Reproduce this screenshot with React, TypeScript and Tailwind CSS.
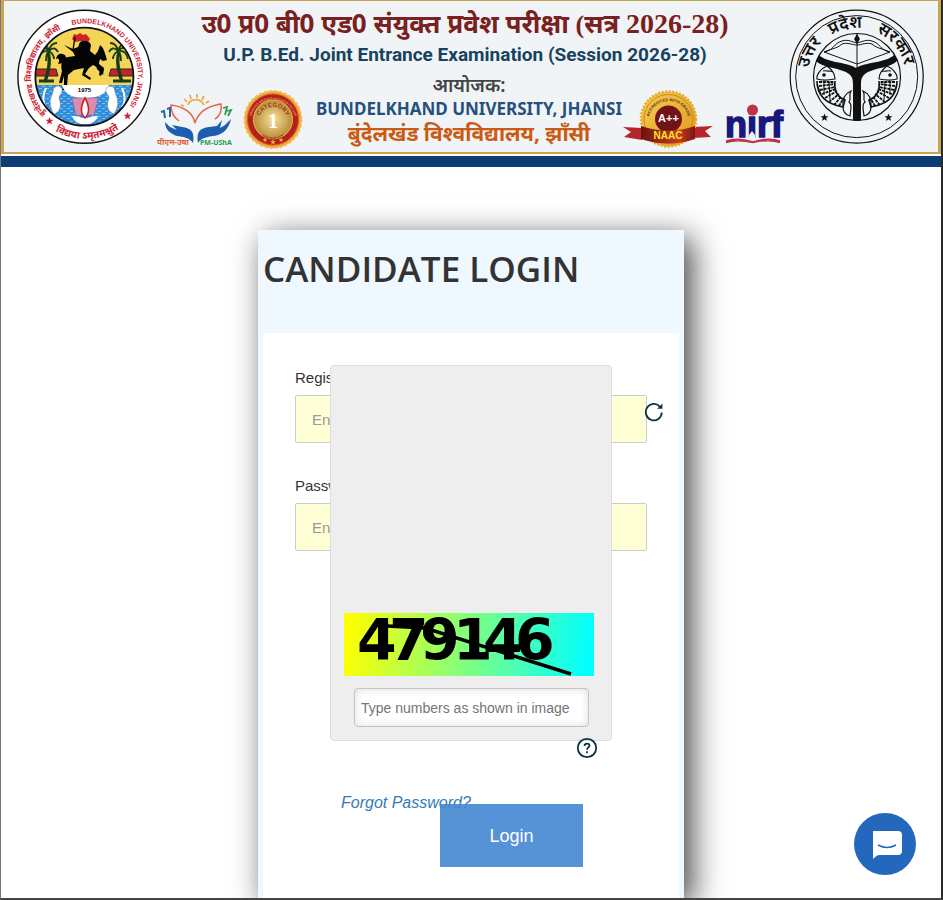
import { FormEvent, useState } from 'react';

const STAR = '0,-4 1.1,-1.2 4,-1.2 1.7,0.6 2.5,3.5 0,1.8 -2.5,3.5 -1.7,0.6 -4,-1.2 -1.1,-1.2';

function UniversityEmblem() {
  return (
    <svg viewBox="17 9 136 136" className="size-[136px] shrink-0" role="img" aria-label="Bundelkhand University">
      <defs>
        <path id="bu-hi" d="M 46.2 113.6 A 53 53 0 0 1 69 26" />
        <path id="bu-en" d="M 72 25 A 53 53 0 0 1 127 109" />
        <path id="bu-motto" d="M 52 129 A 61.5 61.5 0 0 0 122 127" />
        <clipPath id="bu-clip">
          <circle cx="84.4" cy="76.7" r="48.5" />
        </clipPath>
        <pattern id="bu-water" width="7" height="5" patternUnits="userSpaceOnUse">
          <rect width="7" height="5" fill="#2f8ddb" />
          <path d="M0 1.2h3M4 3.6h3" stroke="#9fd4f7" strokeWidth=".8" />
        </pattern>
      </defs>
      <circle cx="84.4" cy="76.7" r="66.5" fill="#fff" stroke="#111" strokeWidth="1.4" />
      <g clipPath="url(#bu-clip)">
        <rect x="34" y="26" width="102" height="60" fill="#f4d558" />
        <rect x="34" y="85" width="102" height="42" fill="url(#bu-water)" />
        <path d="M34 69h22l2 7H34zM135 69h-24l-2 7h26z" fill="#c4232b" stroke="#14321a" />
        {/* palms */}
        <g fill="none" stroke="#143d18">
          <path d="M48 52c3 10 0 20-3 30M119 52c-3 10 0 20 3 30" strokeWidth="3.4" />
          <path
            d="M49 51c-5-5-9-4-12 0M49 51c-6-1-9 3-10 8M49 51c-3 3-3 7-3 10M49 51c4-4 7-3 9 1M49 51c-1-5-5-8-9-7M49 51c3 2 5 5 5 8M49 51c1-5 4-8 8-8"
            strokeWidth="1.8"
          />
          <path
            d="M118 51c5-5 9-4 12 0M118 51c6-1 9 3 10 8M118 51c3 3 3 7 3 10M118 51c-4-4-7-3-9 1M118 51c1-5 5-8 9-7M118 51c-3 2-5 5-5 8M118 51c-1-5-4-8-8-8"
            strokeWidth="1.8"
          />
          <path d="M39 81h15M113 81h18" strokeWidth="3" />
        </g>
        {/* rider */}
        <path d="M72 39l2-5 3 1 3-2 3 2 3-1 4 5-2 3-7-1-6 1z" fill="#cf2227" />
        <path
          d="M79 45c0-5 10-6 12 0l-1 6 5 4 3-4 2-6 3 3 3 9-4 2-3-1 0 6 5 4-3 8-2-1 1-6-7-4-4 3-4 6 6 4-1 2-8-5 2-7-10 2-6 5-1 11-3 4h-2l2-6v-8l-2 7h-3l3-12c-2-6 0-13 6-14l7-1-2-4-9-7 9 4 5-2z"
          fill="#050505"
        />
        <path d="M65 55c-6-3-8 0-9 4 3-2 4 2 2 5 4 0 7-3 9-5z" fill="#050505" />
        <path d="M94 58l5-8 5 1 3 9-4 1-3-2-2 8 6 2-1 6-6-6z" fill="#050505" />
        <path d="M75 37l-2 13" stroke="#050505" strokeWidth="1.4" fill="none" />
        {/* bowl with the founding year */}
        <path d="M62 85h47c-3 10-12 13-24 13S65 95 62 85z" fill="#fff" />
        <path d="M72 98h26l-4 17H76z" fill="#dc8dad" stroke="#a45d86" strokeWidth=".6" />
        <path d="M72 116c7 0 8 2 13 2s6-2 13-2c-2 5-5 7-9 8h-8c-4-1-7-3-9-8z" fill="#fff" />
        <path d="M85 98c5 9 4 16 0 20-4-4-5-11 0-20z" fill="#fff" stroke="#cf2227" strokeWidth="1.6" />
        <path
          d="M54 88c3-3 7-2 8 1 1 4-3 6-3 9 3 8 1 14-5 16-4-6-5-13-2-19zM114 88c-3-3-7-2-8 1-1 4 3 6 3 9-3 8-1 14 5 16 4-6 5-13 2-19z"
          fill="#fff"
          stroke="#6f8fae"
          strokeWidth=".6"
        />
        <path d="M46 88c-3 6-4 14 0 19M122 88c3 6 4 14 0 19" fill="none" stroke="#fff" strokeWidth="2" />
      </g>
      <circle cx="84.4" cy="76.7" r="49" fill="none" stroke="#111" strokeWidth="1.8" />
      <text x="84.5" y="92" textAnchor="middle" className="fill-black font-['Liberation_Sans'] text-[6px] font-bold">1975</text>
      <g className="fill-[#cf1f35] font-['Liberation_Sans','Noto_Sans',sans-serif] font-bold">
        <text className="text-[8px]"><textPath href="#bu-hi">बुन्देलखण्ड विश्वविद्यालय, झाँसी</textPath></text>
        <text className="text-[7px]"><textPath href="#bu-en">BUNDELKHAND UNIVERSITY, JHANSI</textPath></text>
        <text className="text-[10px]"><textPath href="#bu-motto" startOffset="50%" textAnchor="middle">विद्यया ऽमृतमश्नुते</textPath></text>
      </g>
      <polygon points={STAR} transform="translate(49.500 121)" fill="#cf1f35" />
      <polygon points={STAR} transform="translate(127.500 116)" fill="#cf1f35" />
    </svg>
  );
}

function PmUshaLogo() {
  return (
    <svg viewBox="157 90 76 60" className="h-[60px] w-[76px] shrink-0" role="img" aria-label="PM-USHA">
      <path
        d="M188 105c2-7 13-7 16 0M184 106l-3-1M187 102l-3-3M191 99l-1-4M197 98l0-4M202 100l2-4M206 103l3-2"
        fill="none"
        stroke="#f0a33a"
        strokeWidth="1.7"
      />
      <path
        d="M195 123c-2-9-9-16-24-18 0 7 2 12 8 16M195 123c3-10 12-17 26-19 1 7-1 12-6 15"
        fill="none"
        stroke="#e9633f"
        strokeWidth="1.5"
      />
      <path d="M167 109l3-1 0 9M161 112l3-1 1 7" fill="none" stroke="#2563ad" strokeWidth="2" />
      <path d="M223 108l4-1-2 8M227 111l4-1-3 6" fill="none" stroke="#2f9a51" strokeWidth="1.8" />
      <path
        d="M193 143c2-11-2-15-11-16l-10-2 5 5-7-3-5-5c0 8 6 12 12 14 6 1 12 1 16 7zM198 143c-2-11 2-15 11-16l8-1 5-6-2 8 5-3 6-6c-2 9-7 14-13 16-7 2-16 1-20 8z"
        fill="#1c5db0"
      />
      <g className="font-['Noto_Sans',sans-serif] font-bold">
        <text x="157" y="145" className="fill-[#e9633f] text-[8px]">पीएम-उषा</text>
        <text x="200" y="145" className="fill-[#1f9a52] text-[7px]">PM-UShA</text>
      </g>
    </svg>
  );
}

function CategoryBadge() {
  return (
    <svg viewBox="243 90 60 60" className="size-[60px] shrink-0" role="img" aria-label="Category 1 University">
      <defs>
        <radialGradient id="cat-gold">
          <stop offset="0" stopColor="#f5e3a0" />
          <stop offset="1" stopColor="#b98c35" />
        </radialGradient>
        <path id="cat-top" d="M 259 121 A 14 14 0 0 1 287 121" />
        <path id="cat-bottom" d="M 255 122 A 18 18 0 0 0 291 122" />
        <path id="cat-ring" d="M 252 130 A 22.500 22.500 0 1 1 294 130" />
      </defs>
      <circle cx="273" cy="119.500" r="28.500" fill="#eda63c" />
      <circle cx="273" cy="119.500" r="28.500" fill="none" stroke="#f6bd58" strokeWidth="2" strokeDasharray="3 2" />
      <circle cx="273" cy="119.500" r="25.500" fill="#b3211d" stroke="#d9541f" />
      <circle cx="273" cy="119.500" r="19.500" fill="url(#cat-gold)" stroke="#e8bd59" />
      <text className="fill-[#e9a455] font-['Liberation_Sans'] text-[3px] font-bold">
        <textPath href="#cat-ring" startOffset="50%" textAnchor="middle">GRANTED GRADED AUTONOMY BY UGC</textPath>
      </text>
      <g className="fill-[#9d3420] font-['Liberation_Sans'] font-bold">
        <text className="text-[6px]"><textPath href="#cat-top" startOffset="50%" textAnchor="middle">CATEGORY</textPath></text>
        <text className="text-[4px]"><textPath href="#cat-bottom" startOffset="50%" textAnchor="middle">UNIVERSITY</textPath></text>
      </g>
      <text x="273" y="128" textAnchor="middle" className="fill-white font-['Liberation_Serif'] text-[20px] font-bold">1</text>
      <g fill="#f5b82e">
        <polygon points={STAR} transform="translate(265 140) scale(.6)" />
        <polygon points={STAR} transform="translate(273 142) scale(.7)" />
        <polygon points={STAR} transform="translate(281 140) scale(.6)" />
      </g>
    </svg>
  );
}

function NaacBadge() {
  return (
    <svg viewBox="621 88 90 62" className="h-[62px] w-[90px] shrink-0" role="img" aria-label="NAAC A++">
      <defs>
        <linearGradient id="naac-gold" x1="0" y1="0" x2="1" y2="1">
          <stop offset="0" stopColor="#f7cf52" />
          <stop offset="1" stopColor="#e0961c" />
        </linearGradient>
        <linearGradient id="naac-ribbon">
          <stop offset="0" stopColor="#6d1210" />
          <stop offset=".7" stopColor="#c93a20" />
          <stop offset="1" stopColor="#7a1511" />
        </linearGradient>
        <path id="naac-top" d="M 646.500 121 A 20 20 0 1 1 686.500 121" />
      </defs>
      <path d="M621 127l19 1v12l-18-3 7-5zM711 126l-20 1v11l18-1-6-6z" fill="#b8252a" />
      <circle cx="666.500" cy="119" r="27.500" fill="url(#naac-gold)" stroke="#eaa928" strokeWidth="2.500" strokeDasharray="2 1.500" />
      <circle cx="666.500" cy="119" r="24.500" fill="none" stroke="#c8861f" />
      <circle cx="666.500" cy="119" r="13.500" fill="#701417" />
      <text className="fill-[#533210] font-['Liberation_Sans'] text-[4px] font-bold">
        <textPath href="#naac-top" startOffset="50%" textAnchor="middle">ACCREDITED WITH GRADE</textPath>
      </text>
      <text x="666.500" y="122" textAnchor="middle" className="fill-white font-['Liberation_Sans'] text-[11px] font-bold">A++</text>
      <path d="M639 126c18 6 37 6 54 0v13c-17 6-36 6-54 0z" fill="url(#naac-ribbon)" />
      <text x="666" y="139" textAnchor="middle" className="fill-[#ffe81f] font-['Liberation_Sans'] text-[10px] font-bold">NAAC</text>
    </svg>
  );
}

function NirfLogo() {
  return (
    <svg viewBox="724 100 64 50" className="h-[50px] w-[64px] shrink-0" role="img" aria-label="NIRF">
      <text x="724" y="137" stroke="#17177c" strokeWidth="1.500" className="fill-[#17177c] font-['Liberation_Sans'] text-[36px] font-bold">nirf</text>
      <circle cx="751.500" cy="110" r="5.500" fill="#bf3345" />
      <path d="M748 138v-3l3-4 3 4v3z" fill="#f0f4f6" />
      <path d="M725 141c10-3 18-2 27 1 9-3 18-4 27-1M725 142.500c10-3 18-2 27 0 9-2 18-3 27 0" fill="none" stroke="#bf3345" strokeWidth="1.500" />
    </svg>
  );
}

function Fish() {
  return (
    <g fill="none" stroke="#111" strokeWidth="1.200">
      <path d="M816 79c-1-5 5-11 10-13 4 3 8 7 8 13-5 1-12 2-18 0z" />
      <path d="M822 71c4-1 7 1 9 0" />
      <circle cx="823" cy="75" r="1.200" fill="#111" />
      <path d="M816 81c0 14 9 23 26 26l2-7c-8-3-11-10-10-19" strokeWidth="1.600" />
      <path d="M818 82h15M818 86l16-2M819 90l15-3M821 94l14-5M824 98l12-7M828 102l10-8M833 105l7-8M838 106l4-7" strokeWidth="1.800" strokeDasharray="3 .8" />
      <path d="M823 82l0 13M828 82l1 18M816 84l4 10" strokeWidth="1" />
      <path d="M842 107c-1-8 1-13 8-16-3 5 1 8-2 11 3 2 2 6 1 14-4-1-7-4-7-9z" />
    </g>
  );
}

function StateEmblem() {
  return (
    <svg viewBox="788 9 136 136" className="size-[136px] shrink-0" role="img" aria-label="Government of Uttar Pradesh">
      <defs>
        <path id="up-text" d="M 807.500 68.200 A 49 49 0 0 1 904.200 69.800" />
        <clipPath id="up-clip">
          <circle cx="856" cy="77" r="44" />
        </clipPath>
      </defs>
      <g fill="none" stroke="#111">
        <circle cx="855.700" cy="76.600" r="66.500" strokeWidth="1.200" />
        <circle cx="855.700" cy="76.600" r="61" strokeWidth="1" />
        <circle cx="856" cy="77" r="43.500" strokeWidth="1.200" />
      </g>
      <g clipPath="url(#up-clip)">
        <path
          d="M818 55c8 8 28 7 37 13 9-6 30-5 38-13l4 5c-8 9-24 7-33 14-4 3-4 7-4 12v36h-8V86c0-5 0-9-4-12-9-7-26-5-34-14z"
          fill="#111"
        />
        <Fish />
        <g transform="translate(1712 0) scale(-1 1)">
          <Fish />
        </g>
      </g>
      <path
        d="M823 52c9-1 10-9 18-11 6-2 10 1 15 2 5-1 9-4 15-2 8 2 9 10 18 11M823 52c9-4 12-3 18-8 6-2 10 1 15 1 5 0 9-3 15-1 6 5 9 4 18 8M823 52l33 12 33-12M856 34v36"
        fill="none"
        stroke="#111"
        strokeWidth="1"
      />
      <path d="M856 34l3 5-3 5-3-5z" fill="#111" />
      <g className="fill-[#111] font-['Noto_Sans',sans-serif] text-[17px] font-semibold">
        <text><textPath href="#up-text">उत्तर</textPath></text>
        <text><textPath href="#up-text" startOffset="30%">प्रदेश</textPath></text>
        <text><textPath href="#up-text" startOffset="64%">सरकार</textPath></text>
      </g>
      <polygon points={STAR} transform="translate(823.500 117.500)" fill="#111" />
      <polygon points={STAR} transform="translate(887.500 117.500)" fill="#111" />
    </svg>
  );
}

function Banner() {
  return (
    <header className="border-b-[11px] border-[#0f3b74]">
      <div className="mb-0.5 flex items-start justify-between border-x-[3px] border-t border-b-2 border-[#c9a455] bg-[#f0f4f6] px-[13px] pb-0.5">
        <div className="pt-2"><UniversityEmblem /></div>
        <div className="flex min-w-0 flex-1 flex-col pt-0.5 whitespace-nowrap">
          <h1 className="h-10 pr-3 text-center font-['Noto_Sans',sans-serif] text-[26px] leading-10 font-bold text-[#7b2020]">
            उ0 प्र0 बी0 एड0 संयुक्त प्रवेश परीक्षा <span className="font-['Liberation_Serif',serif]">(</span>सत्र{' '}
            <span className="font-['Liberation_Serif',serif] text-[28px] leading-none">2026-28)</span>
          </h1>
          <p className="pr-3 text-center font-['Roboto',sans-serif] text-[19px] leading-6 font-bold text-[#17435f]">
            U.P. B.Ed. Joint Entrance Examination (Session 2026-28)
          </p>
          <div className="flex items-end pt-1.5 pl-1">
            <PmUshaLogo />
            <div className="w-2.5 shrink-0" />
            <CategoryBadge />
            <div className="flex-1 pb-[5px] pl-3 text-center font-['Noto_Sans',sans-serif]">
              <p className="text-[19px] leading-6 font-semibold text-[#444]">आयोजक:</p>
              <p className="text-[17px] leading-6 font-bold text-[#25507c]">BUNDELKHAND UNIVERSITY, JHANSI</p>
              <p className="text-[21px] leading-6 font-bold text-[#cb5a13]">बुंदेलखंड विश्वविद्यालय, झाँसी</p>
            </div>
            <NaacBadge />
            <div className="w-3 shrink-0" />
            <NirfLogo />
          </div>
        </div>
        <div className="pt-2"><StateEmblem /></div>
      </div>
    </header>
  );
}

function CaptchaImage() {
  return (
    <svg viewBox="344 613 250 63" className="h-[63px] w-[250px]" role="img" aria-label="Captcha">
      <defs>
        <linearGradient id="captcha-bg" gradientUnits="userSpaceOnUse" x1="346" y1="628" x2="590" y2="661">
          <stop offset="0" stopColor="#ffff00" />
          <stop offset="1" stopColor="#00ffff" />
        </linearGradient>
      </defs>
      <rect x="344" y="613" width="250" height="63" fill="url(#captcha-bg)" />
      <g className="fill-black font-['DejaVu_Sans'] text-[57px] font-bold">
        <text x="357" y="660">4</text>
        <text x="389" y="660">7</text>
        <text x="420" y="660">9</text>
        <text x="453" y="660">1</text>
        <text x="483" y="660">4</text>
        <text x="515" y="660">6</text>
      </g>
      <path d="M387 626l38 2 146 46" fill="none" stroke="#000" strokeWidth="3.500" />
    </svg>
  );
}

interface FieldProps {
  id: string;
  label: string;
  type: string;
  placeholder: string;
  value: string;
  onChange: (value: string) => void;
}

function Field({ id, label, type, placeholder, value, onChange }: FieldProps) {
  return (
    <div>
      <label htmlFor={id} className="block pb-[7px] text-[15px] leading-5 text-[#333]">{label}</label>
      <input
        id={id}
        type={type}
        value={value}
        placeholder={placeholder}
        onChange={(e) => onChange(e.target.value)}
        className="block h-12 w-full rounded-xs border border-[#ccc] bg-[#ffffd5] px-4 text-[15px] text-[#333] placeholder:text-[#999]"
      />
    </div>
  );
}

export default function App() {
  const [registration, setRegistration] = useState('');
  const [password, setPassword] = useState('');
  const [captcha, setCaptcha] = useState('');

  const handleSubmit = (e: FormEvent) => e.preventDefault();

  return (
    <div className="flex h-screen flex-col overflow-hidden border-r-2 border-b-2 border-l border-r-[#2b2b2b] border-b-[#444] border-l-[#777] bg-white font-['Liberation_Sans',Arial,sans-serif]">
      <Banner />

      <main className="flex flex-1 justify-center pt-[63px]">
        <section className="flex w-full max-w-[426px] flex-col bg-[#eff7ff] px-[5px] shadow-[8px_8px_30px_#444]">
          <h2 className="h-[103px] pt-3.5 font-['Open_Sans',sans-serif] text-[35px] leading-[50px] font-semibold text-[#333]">
            CANDIDATE LOGIN
          </h2>

          <form onSubmit={handleSubmit} className="relative flex-1 bg-white px-8 pt-[35px]">
            <div className="space-y-[33px]">
              <Field
                id="registration"
                label="Registration Number"
                type="text"
                placeholder="Enter Registration Number"
                value={registration}
                onChange={setRegistration}
              />
              <Field
                id="password"
                label="Password"
                type="password"
                placeholder="Enter Password"
                value={password}
                onChange={setPassword}
              />
            </div>

            {/* captcha panel floats over the fields */}
            <div className="absolute top-8 left-[67px] flex h-[376px] w-[282px] flex-col justify-end rounded border border-[#ddd] bg-[#eee] px-[13px] pb-[13px]">
              <CaptchaImage />
              <input
                type="text"
                aria-label="Captcha"
                value={captcha}
                placeholder="Type numbers as shown in image"
                onChange={(e) => setCaptcha(e.target.value)}
                className="mt-3 ml-2.5 h-[39px] w-[235px] rounded border border-[#bcc6cc] bg-white px-1.5 text-sm text-[#333] shadow-[inset_0_0_8px_#ddd] placeholder:text-[#757575]"
              />
            </div>
            <button type="button" aria-label="Refresh captcha" className="absolute top-[69px] left-[381px]">
              <svg viewBox="0 0 20 20" className="size-5" fill="none" stroke="#0b3242" strokeWidth="1.800">
                <path d="M17.800 10.500A8 8.300 0 1 1 15.800 4.600" />
                <path d="M18.400 1.500v5.300h-5.400l2.600-2.200z" fill="#0b3242" stroke="none" />
              </svg>
            </button>
            <button type="button" aria-label="Help" className="absolute top-[404px] left-[313px]">
              <svg viewBox="0 0 22 22" className="size-[22px]" fill="none" stroke="#0b3242" strokeWidth="1.800">
                <circle cx="11" cy="11" r="9.200" />
                <path d="M8.500 9c0-3.200 5-3.200 5-.5 0 1.900-2.500 2-2.500 4.200M11 14.200v2" />
              </svg>
            </button>

            <div className="pt-[240px] pl-[46px]">
              <a href="#forgot" className="text-base leading-5 text-[#337ab7] italic">Forgot Password?</a>
            </div>
            <button type="submit" className="relative -mt-[11px] ml-[145px] block h-[63px] w-[143px] bg-[#4387d1]/90 text-lg text-white">
              Login
            </button>
          </form>
        </section>
      </main>

      <button type="button" aria-label="Open chat" className="fixed right-[27px] bottom-[25px] size-[62px] rounded-full bg-[#2468bd]">
        <svg viewBox="0 0 62 62" className="size-full">
          <path d="M19 18h25q4 0 4 4v16q0 4-4 4H25q-2 0-6 4z" fill="#fff" />
          <path d="M24 32q9 5 18 0" fill="none" stroke="#2468bd" strokeWidth="1.600" />
        </svg>
      </button>
    </div>
  );
}
